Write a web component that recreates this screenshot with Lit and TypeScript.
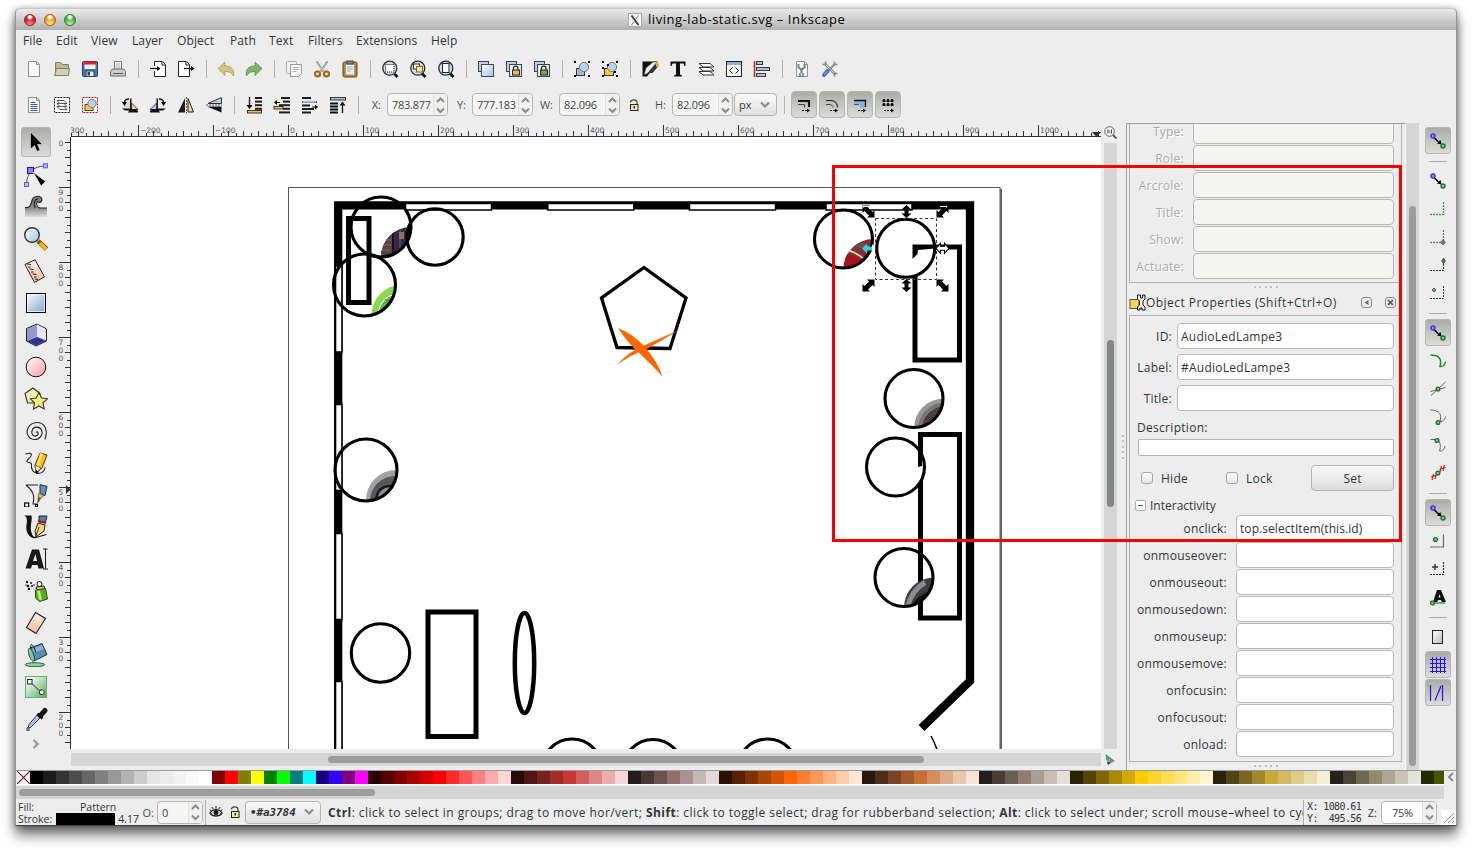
import { LitElement, html, svg, css } from "lit";
import { customElement } from "lit/decorators.js";

const FILE_MENU: [string, number][] = [
  ["File", 33], ["Edit", 35], ["View", 41], ["Layer", 45], ["Object", 53],
  ["Path", 39], ["Text", 39], ["Filters", 48], ["Extensions", 75], ["Help", 40],
];

const PALETTE = (
  "000000 1a1a1a 333333 4d4d4d 666666 808080 999999 b3b3b3 cccccc e6e6e6 ececec f2f2f2 f9f9f9 ffffff " +
  "800000 ff0000 808000 ffff00 008000 00ff00 008080 00ffff 160080 3600ff 800080 ff00ff " +
  "2b0000 550000 800000 aa0000 d40000 ff0000 ff2a2a ff5555 ff8080 ffaaaa ffd5d5 " +
  "280b0b 501616 782121 a02c2c c83737 d35f5f de8787 e9afaf f4d7d7 " +
  "241c1c 483737 6c5353 916f6f ac9393 c8b7b7 e3dbdb " +
  "2b1100 552200 803300 aa4400 d45500 ff6600 ff7f2a ff9955 ffb380 ffccaa ffe6d5 " +
  "28170b 502d16 784421 a05a2c c87137 d38d5f deaa87 e9c6af f4e3d7 " +
  "241f1c 483e37 6c5d53 917c6f ac9d93 c8beb7 e3dedb " +
  "2b2200 554400 806600 aa8800 d4aa00 ffcc00 ffd42a ffdd55 ffe680 ffeeaa fff6d5 " +
  "28220b 504416 786721 a0892c c8ab37 d3bc5f decd87 e9ddaf f4eed7 " +
  "24221c 484537 6c6753 918a6f aca793 c8c4b7 e3e2db 222b00 445500"
).split(" ");

const page = svg`<path d="M3.5 1.5h8l3 3v12h-11z" fill="#fafafa" stroke="#8f918c"/><path d="M11.5 1.5v3h3" fill="none" stroke="#8f918c"/>`;
const lens = svg`<path d="M12.5 13l4 4" stroke="#111" stroke-width="2.6"/><circle cx="8.8" cy="8.2" r="7" fill="#cfe0f2" stroke="#23282d" stroke-width="1.3"/>`;
const padlock = (c: string) => svg`<path d="M8.5 10V8.3a2.2 2.2 0 0 1 4.4 0V10" fill="none" stroke="#222" stroke-width="1.2"/><rect x="7.5" y="10" width="7" height="5" fill="${c}" stroke="#222"/>`;
const clones = svg`<rect x="1.5" y="1.5" width="10" height="10" fill="#b9d0e6" stroke="#3b4650"/><rect x="4.5" y="4.5" width="12" height="12" fill="url(#blue)" stroke="#3b4650"/>`;
const groupShape = svg`<rect x="3.5" y="8.5" width="8" height="7" fill="#9fbad5" stroke="#333"/><circle cx="11" cy="7" r="4.6" fill="#bcd2e8" stroke="#777"/>`;
const bars = (w: number[]) => w.map((v, i) => svg`<rect x="${17 - v}" y="${1 + i * 3.6}" width="${v}" height="2" fill="#1b1e1f"/>`);

const ICONS: Record<string, unknown> = {
  new: page,
  open: svg`<path d="M2.500 14.500v-12h5l2 2h6v10z" fill="#b9bb97" stroke="#7e805f"/><path d="M1.500 15.500l2-7h13l-1 7z" fill="#cfd1b0" stroke="#7e805f"/>`,
  save: svg`<rect x="1.500" y="1.500" width="15" height="15" rx="1" fill="#4577b4" stroke="#26426b"/><rect x="3.500" y="2" width="11" height="7" fill="#f4f4f4"/><rect x="3" y="1.500" width="12" height="3" fill="#e02020"/><rect x="5" y="11" width="8" height="5.500" fill="#e8e8e8" stroke="#345"/><rect x="6.500" y="12" width="2.500" height="3.500" fill="#27466f"/>`,
  print: svg`<path d="M5.500 10v-8.500h7V10" fill="#fff" stroke="#777"/><path d="M6.500 4h5M6.500 6h5M6.500 8h5" stroke="#aaa"/><path d="M1.500 16v-4.500l2-2.500h11l2 2.500V16z" fill="#ccc" stroke="#666"/><path d="M4 13.500h10" stroke="#555"/>`,
  import: svg`<path d="M5.500 6V1.500h8l3 3v12h-11V11" fill="#fff" stroke="#222"/><path d="M13 1.500v3.500h3.500" fill="none" stroke="#222"/><path d="M1 8.500h7" stroke="#111" stroke-width="1.300"/><path d="M8 6l3.500 2.500L8 11z"/>`,
  export: svg`<path d="M1.500 1.500h8l3 3v12h-11z" fill="#fff" stroke="#222"/><path d="M9 1.500v3.500h3.500" fill="none" stroke="#222"/><path d="M7 8.500h8" stroke="#111" stroke-width="1.300"/><path d="M14 6l3.500 2.500L14 11z"/>`,
  undo: svg`<path d="M1 8.500l7-6.500v4c7 0 9.500 4 8.500 10-1.500-3-4-4.500-8.500-4.500v4z" fill="#cfc587" stroke="#a2974e" stroke-dasharray="1.500 .6"/>`,
  redo: svg`<path d="M17 8.500L10 2v4C3 6 .5 10 1.500 16c1.500-3 4-4.500 8.500-4.500v4z" fill="#7fb46b" stroke="#4f8a3a" stroke-dasharray="1.500 .6"/>`,
  copy: svg`<rect x="1.500" y="1.500" width="10" height="12" rx="1" fill="#f3f3f3" stroke="#a8a8a8"/><path d="M5.500 4.500h11v9l-3 3h-8z" fill="#f6f6f6" stroke="#999"/><path d="M7.500 7.500h7M7.500 9.500h7M7.500 11.500h4" stroke="#b5b5b5"/>`,
  cut: svg`<path d="M3.500 1.500l7 10M14.500 1.500l-7 10" stroke="#8b8d89" stroke-width="2"/><path d="M4 2.500l6.500 9M14 2.500l-6.500 9" stroke="#ddd" stroke-width=".7"/><circle cx="4.500" cy="14" r="2.500" fill="none" stroke="#a9640e" stroke-width="2.200"/><circle cx="13.500" cy="14" r="2.500" fill="none" stroke="#a9640e" stroke-width="2.200"/>`,
  paste: svg`<rect x="2" y="2" width="14" height="15" rx="1.500" fill="#c0821f" stroke="#6d4508"/><rect x="4.500" y="4" width="9" height="11" fill="#f0f0f0" stroke="#999"/><rect x="6" y="1" width="6" height="3" fill="#888" stroke="#444"/><path d="M6 7h6M6 9h6M6 11h4" stroke="#aaa"/>`,
  zoomsel: svg`${lens}<rect x="4.500" y="4.500" width="8.500" height="7.500" fill="#fff" stroke="#111" stroke-dasharray="1 1"/>`,
  zoomdraw: svg`${lens}<rect x="4.500" y="4" width="6" height="5" fill="#fff4cf" stroke="#333"/><rect x="7.500" y="6.500" width="6" height="5.500" fill="#ffe9a8" stroke="#8a6414"/>`,
  zoompage: svg`${lens}<rect x="5.500" y="3.500" width="6.500" height="9" fill="#fff" stroke="#222"/>`,
  dup: clones,
  clone: svg`${clones}<rect x="5.500" y="5.500" width="10" height="10" fill="#fff" opacity=".6"/>${padlock("#f5b93a")}`,
  unclone: svg`${clones}<rect x="5.500" y="5.500" width="10" height="10" fill="#fff" opacity=".6"/>${padlock("#6db04c")}`,
  group: svg`${groupShape}<path d="M1 1h2v2H1zM15 1h2v2h-2zM1 15h2v2H1zM15 15h2v2h-2z"/>`,
  ungroup: svg`<rect x="3.500" y="8.500" width="9" height="7" fill="#ffc93c" stroke="#333"/><circle cx="11" cy="7" r="4.600" fill="#bcd2e8" stroke="#777"/><path d="M1 1h2v2H1zM15 1h2v2h-2zM1 15h2v2H1zM15 15h2v2h-2zM1 7h2v2H1zM13 11h2v2h-2zM6 4h2v2H6z"/>`,
  fill: svg`<path d="M1.500 1.500h15v2L6 16.500H1.500z" fill="#111"/><path d="M3 15L5 8l7-6h4l-9 11z" fill="#f1f1f1" stroke="#444" stroke-width=".6"/><path d="M7 13l9-10 1.500 3-6 7z" fill="#333"/><path d="M14 3l2-2 2 4-2 3z" fill="#f5a81c"/>`,
  text: svg`<path d="M1.500 1.500h15v4.500h-1l-1-2.500h-3.500v11l2 1v1H5v-1l2-1v-11H3.500L2.500 6h-1z" fill="#111"/>`,
  layers: svg`<g fill="#fff" stroke="#333"><path d="M2 11.500h11l4 3.500H6z"/><path d="M2 7.500h11l4 3.500H6z"/><path d="M2 3.500h11l4 3.500H6z"/></g>`,
  xml: svg`<rect x="1.500" y="1.500" width="15" height="15" fill="#fff" stroke="#222"/><path d="M2 3.500h14" stroke="#8fb3da" stroke-width="3"/><path d="M7.500 7.500l-3 3 3 3M10.500 7.500l3 3-3 3" fill="none" stroke="#111"/>`,
  align: svg`<path d="M1.500 1v16" stroke="#d11" stroke-width="1.400"/><g fill="#a9c1da" stroke="#333b44"><rect x="3.500" y="1.500" width="6" height="3"/><rect x="3.500" y="7.500" width="13" height="3"/><rect x="3.500" y="13.500" width="9" height="3"/></g>`,
  docprops: svg`${page}<path d="M5.500 4v3.500l3 2 3-2V4" fill="none" stroke="#777" stroke-width="1.800"/><path d="M8.500 9v4" stroke="#777" stroke-width="2"/><path d="M7 13v4M10 13v4" stroke="#3a6fb0" stroke-width="1.400"/>`,
  prefs: svg`<path d="M3.500 3.500l11 11" stroke="#8a8c88" stroke-width="2.600"/><path d="M4 4l10.500 10.500" stroke="#e4e4e4"/><path d="M14.500 3.500L6 12" stroke="#8a8c88" stroke-width="2.200"/><path d="M6.500 11l-3.500 4" stroke="#3c70b8" stroke-width="4" stroke-linecap="round"/><path d="M6 11.500l-2.500 3" stroke="#a9c8ee" stroke-linecap="round"/><path d="M1.500 4.500h3v-3M16.500 13.500h-3v3M16.500 4.500h-3v-3" fill="none" stroke="#8a8c88" stroke-width="1.600"/>`,
  selall: svg`${page}<path d="M5.500 6.500h5M5.500 8.500h7M5.500 10.500h7M5.500 12.500h7M5.500 14.500h7" stroke="#2b5b9c"/>`,
  sellayers: svg`<rect x="1.500" y="1.500" width="15" height="15" fill="#fff" stroke="#111" stroke-dasharray="2 1"/><g fill="#fff" stroke="#555"><path d="M4 10.500h7l3 3H7z"/><path d="M4 7.500h7l3 3H7z"/><path d="M4 4.500h7l3 3H7z"/></g>`,
  desel: svg`<rect x="1.500" y="1.500" width="15" height="15" fill="#fff" stroke="#c11" stroke-dasharray="2 1"/><rect x="4" y="8.500" width="8" height="6" fill="#ffc93c" stroke="#444"/><circle cx="11" cy="7.500" r="4.200" fill="#bcd2e8" stroke="#777"/>`,
  rotccw: svg`<path d="M10 2.500l1 9.500H1.500z" fill="#999" opacity=".25"/><path d="M10.500 7v6.500H17z" fill="#f4d58a" stroke="#222" stroke-width=".8"/><path d="M1 12.500h10v2H4zM9 13h6l2 2v1.500H7z" fill="#111"/><path d="M9 2.500h1.500V13H9z" fill="#222"/><path d="M3.500 7C3.500 4 5.500 3 8 3" fill="none" stroke="#111" stroke-width="1.300"/><path d="M1 6h5l-2.500 4z"/>`,
  rotcw: svg`<path d="M7.500 7v6.500H1z" fill="#b5cde4" stroke="#222" stroke-width=".8"/><path d="M17 12.500H7v2h7zM9 13H3l-2 2v1.500h10z" fill="#111"/><path d="M7.500 2.500H9V13H7.500z" fill="#222"/><path d="M14.500 7c0-3-2-4-4.500-4" fill="none" stroke="#111" stroke-width="1.300"/><path d="M12 6h5l-2.500 4z"/>`,
  fliph: svg`<path d="M8 2v14.500H1z" fill="#1c1c1c"/><path d="M11 2.500V16h5.500z" fill="#f4d58a" stroke="#222"/><path d="M9.500 1v16.500" stroke="#555" stroke-dasharray="2 1"/>`,
  flipv: svg`<path d="M16.500 10.500v6L2 10.500z" fill="#111"/><path d="M16.500 7.500v-6L3 7.500z" fill="#bad0e5" stroke="#333"/><path d="M1 9h16" stroke="#555" stroke-dasharray="2 1"/>`,
  tobottom: svg`${bars([7, 7, 7, 7])}<rect x="2.500" y="14.500" width="14" height="2.500" fill="#f2c451" stroke="#111" stroke-width=".8"/><path d="M4.500 1v9" stroke="#111" stroke-width="1.300"/><path d="M1.500 9h6l-3 4z"/>`,
  lower: svg`${bars([9, 7, 11, 7, 11])}<rect x="1" y="10.500" width="9" height="2.500" fill="#f2c451" stroke="#111" stroke-width=".8"/><path d="M2 6.500h5" stroke="#111"/><path d="M4 4l-3 2.500L4 9z"/>`,
  raise: svg`<path d="M1 2h9M1 6h15M1 9.500h8M1 13h12M1 16.500h9" stroke="#1b1e1f" stroke-width="2"/><rect x="1.500" y="4.800" width="14" height="2" fill="#a9c1da"/><path d="M11 11h4" stroke="#111"/><path d="M14 8.500l3 2.500-3 2.500z"/>`,
  totop: svg`<rect x="1.500" y="1.500" width="15" height="2.500" fill="#a9c1da" stroke="#111" stroke-width=".8"/><path d="M1 7.500h8M1 10.500h8M1 13.500h8M1 16.500h8" stroke="#111" stroke-width="2"/><path d="M13.500 8v9" stroke="#111" stroke-width="1.300"/><path d="M10.500 9.500h6l-3-4z"/>`,
  lock: svg`<path d="M5.500 6.500C5.500 3 11.500 3 12 6v2" fill="none" stroke="#444" stroke-width="1.200"/><rect x="5.500" y="8.500" width="7.500" height="6" fill="#f3e9a8" stroke="#222"/><path d="M9.200 10v2.500" stroke="#111" stroke-width="1.300"/>`,
  t1: svg`<path d="M3 5h11v6" fill="none" stroke="#111" stroke-width="2.200"/><path d="M3 8.500h6.500v3" fill="none" stroke="#444"/><path d="M7 14.500h5" stroke="#111" stroke-dasharray="2 1"/><path d="M12 12.500l3 2-3 2z"/>`,
  t2: svg`<path d="M3 4.500h5c4 0 6.500 3 6.500 7" fill="none" stroke="#222" stroke-width="1.100"/><path d="M3 8.500h3c3 0 4 1.500 4 3" fill="none" stroke="#444"/><path d="M7 14.500h5" stroke="#111" stroke-dasharray="2 1"/><path d="M12 12.500l3 2-3 2z"/>`,
  t3: svg`<path d="M3 4.500h11.500v7H9V8H3z" fill="#8fb2d6"/><path d="M3 4.500h11.500v6.500" fill="none" stroke="#111" stroke-width="1.300"/><path d="M3 8.500h5" stroke="#456"/><path d="M7 14.500h5" stroke="#111" stroke-dasharray="2 1"/><path d="M12 12.500l3 2-3 2z"/>`,
  t4: svg`<path d="M3 5h12M3 9h12" stroke="#111" stroke-width="1.200"/><path d="M5 3v8M9 3v8M13 3v8" stroke="#111" stroke-width="2" stroke-dasharray="3 1"/><path d="M5 14.500h7" stroke="#111" stroke-dasharray="2 1"/><path d="M12 12.500l3 2-3 2z"/>`,
  eye: svg`<path d="M3 10c3-4.500 9-4.500 12 0-3 4-9 4-12 0z" fill="#eee" stroke="#222" stroke-width="1.300"/><circle cx="9" cy="9.500" r="2.500" fill="#111"/><path d="M9 3v3M5 4l1.200 2.500M13 4l-1.200 2.500M2.500 6.500l2 1.500M15.500 6.500l-2 1.500" stroke="#222"/>`,
};

const TOOLS: unknown[] = [
  svg`<path d="M6.500 2v17l4-3.500 2.500 6 3-1.500-2.500-5.500h5z" fill="#000" stroke="#fff" stroke-width=".5"/>`,
  svg`<path d="M2.500 21C3 10 9 3 21 3" fill="none" stroke="#555"/><g fill="#b9b9f6" stroke="#5b5bec"><rect x=".5" y="19.500" width="4" height="4"/><rect x="19.500" y=".8" width="4" height="4"/></g><rect x="3.500" y="4.500" width="6" height="6" fill="#8484e6" stroke="#2010d0"/><path d="M9 9l12.500 9.500-4.500 4.500z" fill="#000" stroke="#fff" stroke-width=".6"/>`,
  svg`<path d="M1 12.500c5 1 6-3 7-7C9.500 0 17 0 18 4.500c0 2.500-3 4-4 2-3-.5-3 5 1 6.500h8v9H1z" fill="url(#grey)"/><path d="M1 12.500c5 1 6-3 7-7C9.500 0 17 0 18 4.500c0 2.500-3 4-4 2M11 13c-1.500-4-1-9 3-9M23 13h-7c-4-.5-4-6-2-6.500" fill="none" stroke="#222" stroke-width="1.100"/>`,
  svg`<path d="M14 14l8.500 8" stroke="#8a5a0a" stroke-width="5"/><path d="M16 16l6 6" stroke="#f7b21e" stroke-width="3.500"/><circle cx="8" cy="8" r="7.300" fill="url(#blue)" stroke="#333" stroke-width="1.400"/>`,
  svg`<path d="M1 5.500L11 .8l9.500 17L10.500 23.500z" fill="url(#peach)" stroke="#222"/><path d="M3 5l4 .5M4 8h2.500M5.500 10l4 .5M7 13h2.500M8.500 15l4 .5M10 18h2.500M11 20l3 .5" stroke="#222"/>`,
  svg`<rect x="2.500" y="2.500" width="19" height="19" fill="url(#steel)" stroke="#000"/><rect x="3.500" y="3.500" width="17" height="17" fill="none" stroke="#fff" opacity=".7"/>`,
  svg`<path d="M2.500 5.500L13 1l9.500 5v12L12 23l-9.500-5z" fill="#b7b7e4" stroke="#222"/><path d="M13 1.500l9 4.700v10.800L13 14z" fill="#e7e7ff"/><path d="M13 14l9 3.800L12 22.500 3 18z" fill="#33338c"/><path d="M3 6l10-4.500V14L3 17.500z" fill="#9797cf"/>`,
  svg`<circle cx="12" cy="12" r="9.800" fill="url(#pink)" stroke="#111"/>`,
  svg`<path d="M1 6.500L9 1l7 5.500-3 9.500H3.500z" fill="#f6efb3" stroke="#333" stroke-width="1.100"/><path d="M15 5.500l2.500 5.500 6 .8-4.500 4 1.200 6.200-5.200-3-5.500 3 1-6.200-4-4 5.700-.8z" fill="#fdf07e" stroke="#333" stroke-width="1.100"/>`,
  svg`<path d="M12 12.500c1.500-2 3 1 1.500 2.500-3 2.500-6.500 0-5.500-4C9 6 15.500 6 17.500 10c2 5-2 9.500-6.500 9.500-6 0-9-5.500-7.500-10C5.500 2 16 0 20.500 6c2.500 4 2 9 .5 13.500" fill="none" stroke="#222" stroke-width="1.100" transform="translate(0 1)"/>`,
  svg`<path d="M1.500 3c6-2 8 0 3 5-5 4 3 3 3 5-1 5 2 10 7 9.500 4-.5 6-3 6.500-6" fill="none" stroke="#222" stroke-width="1.100"/><path d="M11 14L16 2l7 2-5 13-6 5z" fill="#f8bd25" stroke="#513a07"/><path d="M11 14l6 3-5 5z" fill="#f6e6bd" stroke="#333" stroke-width=".6"/><path d="M12 19v4l3-2z"/><path d="M16 2l3 1-4 12-2-1z" fill="#ffe65c"/>`,
  svg`<path d="M2 2h12M2 2c7 6 9 10 7 19h4" fill="none" stroke="#222" stroke-width="1.100"/><path d="M16 1.500l7 2-2 9-5-2z" fill="#5f93bd" stroke="#234"/><path d="M15 10l5 2.500-3 3-3-1.500z" fill="#f0bb3a" stroke="#444" stroke-width=".7"/><path d="M14 14l3 1.500-4 6z" fill="#555"/><rect x=".7" y="20" width="4" height="4" fill="#fff" stroke="#000" stroke-width="1.200"/><rect x="11.500" y="21.500" width="2" height="2" fill="#fff" stroke="#000"/>`,
  svg`<path d="M.5.500h7c1 5-2 12 0 17 1 4 3 4.500 5 4.500l6-2 4-1v1l-7 2C8 26 1 19 2.500 10 3.500 5 3 2 .5.500z" fill="#111"/><path d="M15 1h8l-1.500 6H15z" fill="#4d80b5" stroke="#223"/><path d="M14 6l8 2" stroke="#b11" stroke-width="2"/><path d="M14 8l7 2-1 6-8 6-1-6z" fill="#fbd477" stroke="#222"/><path d="M12 21l3-9" stroke="#333"/>`,
  svg`<path d="M1.500 21.500L8 2.500h7l5 19h-5.500L13.500 18H8l-1 3.500zM9 14h4l-1.500-7z" fill="#181818"/><path d="M19 2h2.500M23.500 2h-2M21.500 2v19.500M19 22h5" stroke="#111" fill="none"/>`,
  svg`<g fill="#111"><circle cx="3" cy="3" r="1.200"/><circle cx="7" cy="4" r="1"/><circle cx="4" cy="7" r="1.300"/><circle cx="8" cy="7" r="1"/><circle cx="5" cy="10" r="1.300"/><circle cx="10" cy="6" r=".8"/><circle cx="2" cy="6" r=".7"/></g><circle cx="15.500" cy="5" r="2.500" fill="#fff" stroke="#222"/><path d="M12 8l8-1 1 3-8 1z" fill="#e9c45b" stroke="#222"/><path d="M11.500 11l10-1.500 2 10.500-8 2.500-4-3.500z" fill="#5cab1e" stroke="#2c520f"/><path d="M13 12l3-.5 2 10-3-1z" fill="#b8ec84"/>`,
  svg`<path d="M11.500 1.500l10 6L12 22.500l-9.500-6z" fill="url(#peach)" stroke="#222" stroke-width="1.100"/>`,
  svg`<path d="M6 5l12-4.500 5 11L10 18z" fill="#588dae" stroke="#1d3442"/><path d="M8 6l10-4 2 4L10 10z" fill="#a9cfe2" opacity=".6"/><path d="M6 5c-2 0-2 4-1 7s3 7 5 6-2-12-4-13z" fill="#7fca90" stroke="#245"/><path d="M7 6c-1-7 2-6 5 4" fill="none" stroke="#222"/><path d="M9 18v4" stroke="#7aa" stroke-width="2"/><ellipse cx="11" cy="21.700" rx="9.800" ry="2" fill="#8fd29c" stroke="#264"/>`,
  svg`<rect x="1.500" y="1.500" width="21" height="21" fill="url(#greenfade)" stroke="#62b066"/><path d="M6 7l12 11" stroke="#333"/><rect x="3.500" y="4.500" width="4.500" height="4.500" fill="#fff" stroke="#222"/><rect x="15.500" y="15" width="4.500" height="4.500" rx="1.500" fill="#fff" stroke="#222"/>`,
  svg`<path d="M13 8l3 3L7.500 19.500 4 21.500l1-4z" fill="#a9c3ee" stroke="#223" stroke-width=".9"/><path d="M13.500 6.500l5 5" stroke="#111" stroke-width="2.600"/><path d="M16.500 8.500l4.500-5" stroke="#111" stroke-width="5" stroke-linecap="round"/><path d="M4 20c-2 2-1.500 4 0 4s2-2 0-4z" fill="#6f93c9" stroke="#334" stroke-width=".8"/>`,
];

const nodePair = svg`<path d="M5 5.500l6 6" stroke="#000" stroke-width="1.500"/><path d="M12.500 12.500l-4.500-1 3.500-3.500z"/><circle cx="4" cy="4" r="2" fill="#9a9af2" stroke="#3a2df0" stroke-width="1.400"/><circle cx="14" cy="14" r="2" fill="#8dc08d" stroke="#187a20" stroke-width="1.400"/>`;
const gdot = (x: number, y: number) => svg`<circle cx="${x}" cy="${y}" r="1.900" fill="#9ab0a4" stroke="#167a1c" stroke-width="1.300"/>`;

interface Snap { icon?: unknown; on?: boolean; sep?: boolean }
const SNAPS: Snap[] = [
  { icon: nodePair, on: true }, { sep: true }, { icon: nodePair },
  { icon: svg`<path d="M14.500 2v12.500H1" fill="none" stroke="#57905c" stroke-width="1.300" stroke-dasharray="2 1"/>` },
  { icon: svg`<path d="M14.500 2v12.500H1" fill="none" stroke="#777" stroke-width="1.300" stroke-dasharray="2 1"/><path d="M14 11.500l2.500 3-2.500 2.500-2.500-2.500z" fill="#5d8a63" stroke="#3c5a40" stroke-width=".6"/>` },
  { icon: svg`<path d="M14.500 2v12.500H1" fill="none" stroke="#333" stroke-dasharray="2 1"/><path d="M14.500 2l2 3-2 3-2-3z" fill="#4c7a53" stroke="#2b4b30" stroke-width=".6"/>` },
  { icon: svg`<path d="M14.500 2v12.500H1" fill="none" stroke="#333" stroke-dasharray="2 1"/><circle cx="5" cy="6" r="1.500" fill="#8fb093" stroke="#246b2c"/>` },
  { sep: true }, { icon: nodePair, on: true },
  { icon: svg`<path d="M1.500 3c9 0 11.500 4 9.500 11.500 3 .5 5-2 5.500-5" fill="none" stroke="#189022" stroke-width="1.500"/>` },
  { icon: svg`<path d="M2 15.500L16.500 2M1.500 11.500l15-4" stroke="#666"/>${gdot(9, 9)}` },
  { icon: svg`<path d="M1.500 2c9 0 11.500 4 9.500 11.500 3 .5 5-2 5.500-5" fill="none" stroke="#666"/>${gdot(9, 14.5)}` },
  { icon: svg`<path d="M1.500 3.500h7c3 3 3.500 7 2 11.500 3 .5 5-2 5.500-5" fill="none" stroke="#666"/>${gdot(8, 4.5)}` },
  { icon: svg`<path d="M3 16l1.500-6M6 15l1.500-6M2 13l6-2M11 8l1.500-6M14 7l1.500-6M10.500 5.500l6-2" stroke="#c22" stroke-width="1.200"/>${gdot(9, 9)}` },
  { sep: true }, { icon: nodePair, on: true },
  { icon: svg`<path d="M14.500 2.500v12.500H1" fill="none" stroke="#666" stroke-width="1.200"/>${gdot(6.5, 7.5)}` },
  { icon: svg`<path d="M14.500 2v12.500H1" fill="none" stroke="#222" stroke-dasharray="2 1"/><path d="M3 7h6M6 4v6" stroke="#333" stroke-width="1.400"/>` },
  { icon: svg`<path d="M4 14L8 2h4l5 12h-4l-1-2H9l-1 2zM9.500 9.500h2L10.500 6z" fill="#111"/><path d="M2 15h14" stroke="#3b9c43" stroke-width="1.500"/>${gdot(3.5, 15)}` },
  { sep: true },
  { icon: svg`<rect x="3.500" y="2.500" width="10" height="13" fill="url(#sheet)" stroke="#222"/>` },
  { icon: svg`<path d="M1 3.500h16M1 7.500h16M1 11.500h16M1 15.500h16M3.500 1v16M7.500 1v16M11.500 1v16M15.500 1v16" stroke="#2b10ee"/>`, on: true },
  { icon: svg`<path d="M1.500 1v16M13.500 1v16M6 16.500L12 2" stroke="#2b10ee" stroke-width="1.200"/>`, on: true },
];

interface Lamp { x: number; y: number; r: number; art?: string; dx?: number }
/** Lamp and speaker markers placed on the drawing canvas. */
const LAMPS: Lamp[] = [
  { x: 381, y: 227, r: 30, art: "purple" },
  { x: 435, y: 237, r: 28.2 },
  { x: 364.5, y: 285, r: 31, art: "lime", dx: 7 },
  { x: 366, y: 470, r: 31, art: "dark" },
  { x: 380.5, y: 653, r: 29.2 },
  { x: 572, y: 769, r: 30 }, { x: 653, y: 769.5, r: 30 }, { x: 767.5, y: 769, r: 30 },
  { x: 843.5, y: 239, r: 29, art: "red" },
  { x: 914, y: 398.5, r: 29, art: "mesh" },
  { x: 904, y: 577.5, r: 29, art: "black" },
];

const ART: Record<string, unknown> = {
  purple: svg`<rect width="34" height="34" fill="#3a2745"/><path d="M0 8h12v26H0z" fill="#5b4140"/><path d="M3 14h9M2 19h9M0 24h10M3 9h8" stroke="#836a62"/><path d="M20 0v34" stroke="#467a44"/><path d="M19 6h5v7h-5z" fill="#8a7466"/><path d="M13 0v30" stroke="#181028" stroke-width="2"/>`,
  lime: svg`<rect width="34" height="34" fill="#8ad850"/><circle cx="28" cy="30" r="21" fill="#52bb45"/><circle cx="28" cy="30" r="20" fill="none" stroke="#e7f7df" stroke-width="1.300"/><circle cx="28" cy="30" r="15" fill="#2d9e49" stroke="#d6f1ce"/><path d="M13 15l9 1-2 2z" fill="#e44"/>`,
  dark: svg`<rect width="34" height="34" fill="#a2a2a2"/><circle cx="30" cy="32" r="25" fill="#55575a"/><path d="M11 34c0-10 4-17 15-17h8v17z" fill="#8c8e90" stroke="#1a1a1a" stroke-width="2.500"/><path d="M18 34c0-6 3-9 9-10v10z" fill="#2a2b2d"/>`,
  red: svg`<rect width="34" height="34" fill="#83303a"/><path d="M0 14l34 12v10H0z" fill="#a3131d"/><path d="M8 5l22 5" stroke="#66504a" stroke-width="5"/><path d="M4 12q9 2 16 8" fill="none" stroke="#f1e3c2" stroke-width="1.600"/>`,
  mesh: svg`<rect width="34" height="34" fill="#989896"/><circle cx="32" cy="32" r="27" fill="#777674"/><circle cx="32" cy="32" r="23" fill="#37302f"/><circle cx="32" cy="32" r="19" fill="none" stroke="#5b5452" stroke-width="7" stroke-dasharray="1 1"/>`,
  black: svg`<rect width="34" height="34" fill="#3c3e40"/><path d="M4 34c2-14 8-22 18-28" stroke="#8a8d90" stroke-width="5" fill="none"/><path d="M9 34c0-10 7-17 25-22v22z" fill="#151515"/>`,
};

const lamp = (l: Lamp, i: number) => svg`
  ${l.art ? svg`<clipPath id="lamp${i}"><circle cx="${l.x}" cy="${l.y}" r="${l.r}"/></clipPath>
    <g clip-path="url(#lamp${i})"><svg x="${l.x - 1 + (l.dx ?? 0)}" y="${l.y - 1}" width="34" height="34" viewBox="0 0 34 34"><g clip-path="url(#quarter)">${ART[l.art]}</g></svg></g>` : ""}
  <circle cx="${l.x}" cy="${l.y}" r="${l.r}" fill="none" stroke="#000" stroke-width="3.100"/>`;

const ARROW = "M-6-6H1.500L-.5-4 4 .5 6-1.500V6H-1.500L.5 4-4-.5-6 1.500z";
const VARROW = "M0-6.500L5-2H2v4h3L0 6.500-5 2h3v-4h-3z";

const canvasArt = svg`
  <path d="M1000.500 187.500H288.500V760M1000 187.500V760" fill="none" stroke="#555"/>
  <path d="M1001 189V760" stroke="#666" stroke-width="2"/>
  <path d="M338.200 760V205.300H970V681L921.500 728" fill="none" stroke="#000" stroke-width="8.300"/>
  ${[405.5, 547.8, 689.5, 826].map((x) => svg`<rect x="${x}" y="203.500" width="86" height="6.500" fill="#fff" stroke="#000" stroke-width="1.500"/>`)}
  ${[266, 404.5, 533.5, 681.5].map((y) => svg`<rect x="335.500" y="${y}" width="6.500" height="86" fill="#fff" stroke="#000" stroke-width="1.600"/>`)}
  <path d="M931 736Q935 743 937.500 751" fill="none" stroke="#000" stroke-width="1.500"/>
  <g fill="none" stroke="#000" stroke-width="5">
    <rect x="348.500" y="218.500" width="20.500" height="84"/>
    <rect x="915" y="247" width="44.500" height="113"/>
    <rect x="920.500" y="434.500" width="39" height="183.500"/>
    <rect x="428" y="612" width="48" height="124.500"/>
    <ellipse cx="524.500" cy="663" rx="9.700" ry="50" stroke-width="4.500"/>
  </g>
  <path d="M644 267.500L686 298 670 348.500 617 347.500 601.500 298z" fill="none" stroke="#000" stroke-width="3.300"/>
  <path d="M618 328Q632 333 645 347 657 361 663 377 652 365 637 351 628 343 618 328zM617 365Q628 352 645 345L679 330Q661 341 645 350 630 355 617 365z" fill="#ff6600"/>
  <circle cx="895.500" cy="467" r="29" fill="#fff" stroke="#000" stroke-width="3.100"/>
  <path d="M918 449v18l4-1V446z"/>
  ${LAMPS.map(lamp)}
  <circle cx="905.700" cy="248.300" r="29" fill="#fff" stroke="#000" stroke-width="3.100"/>
  <path d="M912.500 244.500H936l-1 4-17 1.500-.5 4-5 5z"/>
  <rect x="875.500" y="218.500" width="61" height="61" fill="none" stroke="#333" stroke-dasharray="3 2.500"/>
  <path d="${ARROW}" transform="translate(868.500 211.500)"/>
  <path d="${VARROW}" transform="translate(906.500 211.500)"/>
  <path d="${ARROW}" transform="translate(942.500 211.500) scale(-1 1)"/>
  <path d="${ARROW}" transform="translate(868.500 285.500) scale(-1 1)"/>
  <path d="${VARROW}" transform="translate(906.500 285.500)"/>
  <path d="${ARROW}" transform="translate(942.500 285.500)"/>
  <path d="M863.500 207.500v-1h6M940 206.500h6.500v1" fill="none" stroke="#fff" stroke-width="1.200"/>
  <path d="M862 248.500l5-5v3h5v-2l3 4-3 4v-2h-5v3z" fill="#2fd0d6"/>
  <path d="M872 246v-2l3 4.500-3 4v-2z" fill="#fff"/>
  <path d="${VARROW}" transform="translate(942.500 248.300) rotate(90)" fill="#fff" stroke="#000" stroke-width="1.100"/>`;

const hRuler = () => {
  const marks: unknown[] = [];
  for (let i = -29; i <= 108; i++) {
    const x = Math.round(288.2 + i * 7.5) + 0.5;
    const h = i % 10 === 0 ? 11 : i % 2 === 0 ? 5 : 3;
    marks.push(svg`<path d="M${x} ${136 - h}V136" stroke="#2c3236"/>`);
    if (i % 10 === 0) marks.push(svg`<text x="${x + 1.5}" y="133">${i < 0 ? "−" : ""}${Math.abs(i * 10)}</text>`);
  }
  return marks;
};
const vRuler = () => {
  const marks: unknown[] = [];
  for (let i = -6; i <= 74; i++) {
    const y = Math.round(187 + i * 7.5) + 0.5;
    const w = i % 10 === 0 ? 11 : i % 2 === 0 ? 5 : 3;
    marks.push(svg`<path d="M${70 - w} ${y}H70" stroke="#2c3236"/>`);
    if (i % 10 === 0) {
      String(900 - i * 10).split("").forEach((d, k) =>
        marks.push(svg`<text x="58.500" y="${y + 7.5 + k * 8}">${d}</text>`));
    }
  }
  return marks;
};

const TB1 = ["new", "open", "save", "print", "|", "import", "export", "|", "undo", "redo", "|", "copy", "cut", "paste", "|", "zoomsel", "zoomdraw", "zoompage", "|", "dup", "clone", "unclone", "|", "group", "ungroup", "|", "fill", "text", "layers", "xml", "align", "|", "docprops", "prefs"];
const TB2 = ["selall", "sellayers", "desel", "|", "rotccw", "rotcw", "fliph", "flipv", "|", "tobottom", "lower", "raise", "totop", "|"];

const icon = (g: unknown, size = 18) => html`<svg width=${size} height=${size} viewBox="0 0 ${size} ${size}">${g}</svg>`;
const tool = (n: string) => n === "|" ? html`<i class="sep"></i>` : html`<span class="cell">${icon(ICONS[n])}</span>`;
const chevrons = html`<span class="steps"><svg width="13" height="22" viewBox="0 0 13 22" fill="none" stroke="#8b8d89" stroke-width="2"><path d="M3 8l3.500-3.500L10 8M3 14.500L6.500 18l3.500-3.500"/></svg></span>`;
const spin = (v: string, cls = "") => html`<span class="spin ${cls}"><b>${v}</b>${chevrons}</span>`;
const dropMark = html`<svg width="10" height="8" viewBox="0 0 10 8" fill="none" stroke="#8b8d89" stroke-width="2.200"><path d="M1 1.500l4 4 4-4"/></svg>`;

@customElement("app-root")
export class AppRoot extends LitElement {
  static styles = css`
    :host { display: block; width: 1472px; height: 849px; overflow: hidden; background: #fff; position: relative; font: 12px "Open Sans", "Noto Sans", sans-serif; color: #2f3638; }
    * { box-sizing: border-box; }
    svg { display: block; flex: none; }
    .defs { position: absolute; width: 0; height: 0; }
    .desktop { padding: 8px 0 0 15px; }
    .window { width: 1442px; height: 818px; background: #ededed; border-left: 1px solid #969696; border-right: 1px solid #969696; border-bottom: 1px solid #3c4242; border-radius: 5px 5px 0 0; box-shadow: 0 9px 13px rgba(0,0,0,.55), 0 1px 7px rgba(0,0,0,.35); display: flex; flex-direction: column; }
    .title { height: 22px; border-radius: 5px 5px 0 0; background: linear-gradient(#e9e9e9, #cfcfcf 50%, #b0b0b0); border-top: 1px solid #c9c9c9; display: flex; align-items: center; flex: none; }
    .lights { display: flex; gap: 8px; padding-left: 8px; width: 612px; }
    .light { width: 12px; height: 12px; border-radius: 50%; border: 1px solid #802020; background: radial-gradient(circle at 50% 20%, #fff 0 12%, transparent 35%), radial-gradient(circle at 50% 100%, #ff9b9b, #dd1f2e 55%); }
    .light.y { border-color: #91601b; background: radial-gradient(circle at 50% 20%, #fff 0 12%, transparent 35%), radial-gradient(circle at 50% 100%, #ffee8e, #ec9c25 60%); }
    .light.g { border-color: #35702f; background: radial-gradient(circle at 50% 20%, #fff 0 12%, transparent 35%), radial-gradient(circle at 50% 100%, #c9f7a9, #4fb04c 60%); }
    .xlogo { width: 14px; height: 14px; border: 1px solid #aaa; background: #f3f3f3; display: flex; }
    .titletext { padding-left: 6px; color: #000; font: 13px/18px "Open Sans", sans-serif; padding-bottom: 1px; letter-spacing: .54px; white-space: nowrap; }
    .menu { height: 22px; display: flex; align-items: center; padding: 0 0 1px 7px; flex: none; letter-spacing: .1px; }
    .menu span { white-space: nowrap; }
    .tb { display: flex; align-items: center; padding-left: 4px; flex: none; }
    .tb.one { height: 34px; }
    .tb.two { height: 37px; }
    .cell { width: 28px; height: 28px; display: flex; align-items: center; justify-content: center; flex: none; }
    .sep { width: 12px; height: 18px; flex: none; display: flex; justify-content: center; }
    .sep::after { content: ""; width: 1px; background: #b3b5b2; height: 100%; }
    .sep.late { width: 14px; }
    .lab { text-align: right; padding-right: 6px; font-size: 11px; flex: none; color: #4a5052; }
    .spin { width: 60.5px; height: 23px; border: 1.5px solid #b4b6b3; border-radius: 4px; background: #f5f5f3; display: flex; align-items: center; flex: none; font-size: 11px; overflow: hidden; color: #3f4547; }
    .spin b { font-weight: 400; flex: 1; padding-left: 4px; letter-spacing: -.25px; white-space: nowrap; }
    .steps { width: 14px; height: 100%; background: #f0f0ef; border-left: 1px solid #e2e2e0; display: flex; align-items: center; }
    .combo { height: 23px; border: 1px solid #b2b4b1; border-radius: 4px; background: linear-gradient(#fafafa, #e0e0e0); display: flex; align-items: center; justify-content: space-between; padding: 0 6px 0 5px; flex: none; }
    .combo.unit { width: 43px; margin-left: 1.5px; font-size: 11px; padding-left: 4px; }
    .tog { width: 26px; height: 27px; margin-right: 2px; border: 1px solid #b3b6b1; border-radius: 4px; background: linear-gradient(#a9aca7, #dcdddb); display: flex; align-items: center; justify-content: center; flex: none; }
    .main { height: 647px; display: flex; flex: none; }
    .tools { width: 41px; padding: 4px 0 0 5px; display: flex; flex-direction: column; }
    .toolcell { width: 30px; height: 32px; display: flex; align-items: center; justify-content: center; flex: none; }
    .toolcell.on { height: 30px; margin-bottom: 2px; border: 1px solid #b3b6b1; border-radius: 3px; background: linear-gradient(#a9aca7, #dcdddb); }
    .more { display: flex; justify-content: center; width: 30px; padding-top: 4px; }
    .view { width: 1060px; display: grid; grid-template-columns: 14px 1030px 3px 13px; grid-template-rows: 14px 612px 4px 13px 4px; flex: none; }
    .ruler { overflow: hidden; font: 7.5px "DejaVu Sans", sans-serif; fill: #50585c; }
    .board { background: #fff; }
    .vbar { grid-column: 4; grid-row: 2; background: #d5d5d5; margin-top: 6px; padding: 197px 3px 0; }
    .vbar::after { content: ""; display: block; height: 167px; border-radius: 4px; background: #838686; }
    .hbar { grid-column: 2; grid-row: 4; background: #d5d5d5; padding: 3px 0 0 257px; }
    .hbar::after { content: ""; display: block; width: 596px; height: 7px; border-radius: 4px; background: #9c9d9e; }
    .corner { grid-column: 4; grid-row: 1; padding-top: 3px; }
    .cms { grid-column: 4; grid-row: 4; }
    .grip { width: 9px; display: flex; flex-direction: column; justify-content: center; align-items: center; gap: 3.5px; flex: none; padding-left: 2px; }
    .grip i, .hgrip i { width: 2px; height: 2px; background: #bfc0bf; }
    .hgrip { display: flex; gap: 3.5px; justify-content: center; align-items: center; height: 8px; flex: none; }
    .dock { width: 280px; border-left: 1px solid #9fa1a0; border-top: 1px solid #9fa1a0; border-right: 1px solid #fff; padding-left: 2px; padding-right: 3px; display: flex; flex-direction: column; overflow: hidden; flex: none; }
    .frame { border: 1px solid #aeb2b0; }
    .frame.link { height: 159px; border-top: 0; overflow: hidden; display: flex; flex-direction: column; justify-content: flex-end; padding-bottom: 3px; flex: none; }
    .frame.props { height: 447px; padding-top: 7px; flex: none; }
    .row { display: flex; align-items: center; height: 26px; margin-bottom: 1px; padding-right: 7px; flex: none; }
    .row label { text-align: right; padding-right: 9px; letter-spacing: .25px; white-space: nowrap; }
    .link label { width: 63px; color: #a7abac; text-shadow: 1px 1px 0 #fff; }
    .link .row:last-child { margin-bottom: 0; }
    .field { flex: 1; height: 26px; border: 1.5px solid #b6bab7; border-radius: 4px; background: #fff; display: flex; align-items: center; padding-left: 3px; letter-spacing: .25px; white-space: nowrap; }
    .events .field { letter-spacing: .07px; }
    .link .field { background: #f4f4f2; }
    .head { height: 22px; margin-bottom: 2px; display: flex; align-items: center; flex: none; font-size: 12px; letter-spacing: .46px; }
    .head span { width: 215px; white-space: nowrap; }
    .hbtn { width: 11px; height: 11px; border: 1px solid #888b89; border-radius: 3px; margin-right: 13px; display: flex; align-items: center; justify-content: center; flex: none; }
    .hbtn:last-child { margin-right: 0; }
    .three .row { margin-bottom: 5px; }
    .three label { width: 47px; padding-right: 5px; }
    .desc { height: 23px; padding: 3px 0 0 7px; letter-spacing: .3px; }
    .area { height: 17px; margin: 0 7px 0 8px; background: #fff; border: 1px solid #b0b3b1; border-radius: 2px; }
    .checks { height: 26px; margin-top: 9px; display: flex; align-items: center; padding: 0 7px 0 11px; letter-spacing: .25px; }
    .box { width: 12px; height: 12px; border: 1px solid #a3a6a4; border-radius: 3px; background: linear-gradient(#fff, #e4e4e4); margin-right: 8px; flex: none; }
    .checks span { width: 66px; }
    .btn { margin-left: auto; width: 84px; height: 26px; border: 1px solid #b2b4b1; border-radius: 4px; background: linear-gradient(#fafafa, #dcdcdc); display: flex; align-items: center; justify-content: center; font-weight: 400; }
    .expand { height: 24px; display: flex; align-items: center; padding: 5px 0 0 5px; }
    .minus { width: 11px; height: 11px; border: 1px solid #a9acaa; border-radius: 2px; background: #fff; display: flex; align-items: center; justify-content: center; margin-right: 4px; }
    .minus::after { content: ""; width: 5px; height: 1px; background: #555; }
    .events label { width: 106px; }
    .events .row:last-child { margin-bottom: 0; }
    .dbar { width: 13px; background: #d5d5d5; padding: 83px 3px 0; flex: none; }
    .dbar::after { content: ""; display: block; height: 560px; border-radius: 4px; background: #9b9c9d; }
    .snaps { width: 37px; padding: 4px 0 0 6px; display: flex; flex-direction: column; }
    .snap { width: 26px; height: 28px; display: flex; align-items: center; justify-content: center; flex: none; }
    .snap.on { height: 27px; margin-bottom: 1px; border: 1px solid #b3b6b1; border-radius: 3px; background: linear-gradient(#a9aca7, #dcdddb); }
    .hsep { height: 12px; display: flex; align-items: center; justify-content: center; flex: none; width: 26px; }
    .hsep::after { content: ""; width: 18px; height: 1px; background: #a9abaa; }
    .palette { height: 16px; border-top: 1px solid #9a9c9b; display: flex; flex: none; padding-left: 1px; }
    .swatches { width: 1427px; height: 14px; border-bottom: 1px solid #fff; display: flex; overflow: hidden; flex: none; }
    .sw { width: 13px; height: 13px; flex: none; }
    .pchev { padding: 1px 0 0 3px; }
    .pbar { height: 13px; width: 1428px; background: #d5d5d5; padding: 3px 0 0 3px; flex: none; }
    .pbar::after { content: ""; display: block; width: 356px; height: 7px; border-radius: 4px; background: #9c9d9e; }
    .status { height: 26px; display: flex; align-items: center; flex: none; }
    .style { width: 125px; display: grid; grid-template-columns: 38px 59px 28px; font-size: 10.5px; line-height: 12px; padding-left: 2px; height: 26px; padding-top: 2px; flex: none; white-space: nowrap; }
    .style .pat { text-align: center; padding-left: 24px; }
    .style .ink { background: #000; height: 12px; }
    .style .w { padding-left: 3px; font-size: 11px; letter-spacing: -.2px; }
    .spin.small { width: 46px; }
    .vline { width: 1px; height: 25px; background: #aeb0af; flex: none; }
    .vline.first { margin-left: 2px; }
    .lab.opacity { width: 16px; padding-right: 3px; }
    .scell { width: 19px; display: flex; justify-content: center; flex: none; }
    .combo.layer { width: 76px; margin-left: 1px; font: italic bold 11px "DejaVu Sans Mono", monospace; letter-spacing: -.1px; padding-left: 4px; }
    .hint { width: 982px; padding-left: 7px; overflow: hidden; white-space: nowrap; letter-spacing: .437px; flex: none; }
    .coords { width: 59px; padding: 1px 0 0 3px; font: 10px/12px "DejaVu Sans Mono", monospace; letter-spacing: -.6px; white-space: pre; flex: none; }
    .zl { width: 18px; text-align: right; padding-right: 4px; flex: none; font-size: 11px; }
    .spin.zoom { width: 56px; background: #fff; }
    .spin.zoom b { padding-left: 10px; }
    .resize { margin: 11px 0 0 4px; background: #fff; }
    .callout { position: absolute; left: 832px; top: 165px; width: 570px; height: 377px; border: 3px solid #f80000; }
  `;

  render() {
    return html`
      <svg class="defs"><defs>
        <linearGradient id="blue" x2="1" y2="1"><stop stop-color="#fff"/><stop offset="1" stop-color="#9fc0e2"/></linearGradient>
        <linearGradient id="steel" x2="1" y2="1"><stop stop-color="#fff"/><stop offset="1" stop-color="#7ba3c9"/></linearGradient>
        <linearGradient id="grey" x2="0" y2="1"><stop stop-color="#777"/><stop offset=".55" stop-color="#888"/><stop offset="1" stop-color="#ddd"/></linearGradient>
        <linearGradient id="peach" x2="0" y2="1"><stop stop-color="#fff4ee"/><stop offset="1" stop-color="#f6b594"/></linearGradient>
        <linearGradient id="pink" x2="1" y2="1"><stop stop-color="#fff"/><stop offset="1" stop-color="#ff9aa4"/></linearGradient>
        <linearGradient id="greenfade" x2="1" y2="1"><stop offset=".1" stop-color="#fff"/><stop offset="1" stop-color="#4cb257"/></linearGradient>
        <linearGradient id="sheet" x2="1" y2="1"><stop stop-color="#fff"/><stop offset="1" stop-color="#bbb"/></linearGradient>
        <clipPath id="quarter"><circle cx="31" cy="31" r="30"/></clipPath>
      </defs></svg>
      <div class="desktop"><div class="window">
        <div class="title">
          <div class="lights"><i class="light"></i><i class="light y"></i><i class="light g"></i></div>
          <span class="xlogo"><svg width="12" height="12" viewBox="0 0 12 12"><path d="M2.500 1.500l7 9.500" stroke="#444" stroke-width="2"/><path d="M9.500 1.500l-7 9.500" stroke="#777"/></svg></span>
          <span class="titletext">living-lab-static.svg – Inkscape</span>
        </div>
        <div class="menu">${FILE_MENU.map(([n, w]) => html`<span style="width:${w}px">${n}</span>`)}</div>
        <div class="tb one">${TB1.map(tool)}</div>
        <div class="tb two">
          ${TB2.map(tool)}
          <span class="lab" style="width:23px">X:</span>${spin("783.877")}
          <span class="lab" style="width:24.5px">Y:</span>${spin("777.183")}
          <span class="lab" style="width:26.5px">W:</span>${spin("82.096")}
          <span class="cell">${icon(ICONS.lock)}</span>
          <span class="lab" style="width:24.5px">H:</span>${spin("82.096")}
          <span class="combo unit">px${dropMark}</span>
          <i class="sep late"></i>
          ${["t1", "t2", "t3", "t4"].map((n) => html`<span class="tog">${icon(ICONS[n])}</span>`)}
        </div>
        <div class="main">
          <div class="tools">
            ${TOOLS.map((t, i) => html`<span class="toolcell ${i === 0 ? "on" : ""}">${icon(t, 24)}</span>`)}
            <span class="more"><svg width="8" height="10" viewBox="0 0 8 10"><path d="M1.500 1l4 4-4 4" fill="none" stroke="#8b8d89" stroke-width="2"/></svg></span>
          </div>
          <div class="view">
            <span></span>
            <svg class="ruler" width="1030" height="14" viewBox="71 123 1030 14">
              ${hRuler()}<text x="70" y="133">300</text>
              <path d="M71 136.500H1101" stroke="#2c3236"/><path d="M1092 132h9l-4.500 5z" fill="#2c3236"/></svg>
            <span></span>
            <span class="corner"><svg width="13" height="13" viewBox="0 0 13 13"><circle cx="5.500" cy="5.500" r="4.800" fill="#f5f5f5" stroke="#666"/><path d="M9 9l3.500 3.500" stroke="#555" stroke-width="1.800"/><path d="M4 3.500v4M7.500 3.500v4M5.700 4.500v.8M5.700 6.200v.8" stroke="#444"/></svg></span>
            <svg class="ruler" width="14" height="612" viewBox="57 137 14 612">
              ${vRuler()}<text x="58.500" y="145.500">0</text>
              <path d="M70.500 137V749" stroke="#2c3236"/><path d="M66 485l4.500 4.500L66 494z" fill="#2c3236"/></svg>
            <svg class="board" width="1030" height="612" viewBox="71 137 1030 612">${canvasArt}</svg>
            <span class="vbar"></span>
            <span class="hbar"></span>
            <span class="cms"><svg width="13" height="13" viewBox="0 0 13 13"><path d="M1.500 1L11 8 4 12z" fill="#9a9"/><path d="M1.500 1l5 4-4 3z" fill="#2fb052"/><path d="M6 5l5 3-5 1z" fill="#b66"/><path d="M3 8.500l4 1-3 2.500z" fill="#33b"/></svg></span>
          </div>
          <div class="grip"><i></i><i></i><i></i><i></i><i></i></div>
          <div class="dock">
            <div class="frame link">
              ${["Type:", "Role:", "Arcrole:", "Title:", "Show:", "Actuate:"].map((n) => html`<div class="row"><label>${n}</label><span class="field"></span></div>`)}
            </div>
            <div class="hgrip"><i></i><i></i><i></i><i></i><i></i></div>
            <div class="head">
              <svg width="17" height="17" viewBox="0 0 17 17"><rect x="1" y="5.500" width="9" height="9" fill="#f9d34f" stroke="#555"/><path d="M8.500 1v4l2 2v4l-2 2v3h2.500v-2h2v2h3v-3l-2-2V7l2-2V1h-2.500v3h-2V1z" fill="#eee" stroke="#111"/></svg>
              <span>Object Properties (Shift+Ctrl+O)</span>
              <i class="hbtn"><svg width="5" height="5" viewBox="0 0 5 5"><path d="M4.500 0v5L.5 2.500z" fill="#666"/></svg></i>
              <i class="hbtn"><svg width="7" height="7" viewBox="0 0 7 7"><path d="M1 1l5 5M6 1L1 6" stroke="#666" stroke-width="1.800"/></svg></i>
            </div>
            <div class="frame props">
              <div class="three">
                <div class="row"><label>ID:</label><span class="field">AudioLedLampe3</span></div>
                <div class="row"><label>Label:</label><span class="field">#AudioLedLampe3</span></div>
                <div class="row"><label>Title:</label><span class="field"></span></div>
              </div>
              <div class="desc">Description:</div>
              <div class="area"></div>
              <div class="checks"><i class="box"></i><span>Hide</span><i class="box"></i><span>Lock</span><b class="btn">Set</b></div>
              <div class="expand"><i class="minus"></i>Interactivity</div>
              <div class="events">
                ${["onclick", "onmouseover", "onmouseout", "onmousedown", "onmouseup", "onmousemove", "onfocusin", "onfocusout", "onload"].map((n, i) => html`<div class="row"><label>${n}:</label><span class="field">${i === 0 ? "top.selectItem(this.id)" : ""}</span></div>`)}
              </div>
            </div>
            <div class="hgrip"><i></i><i></i><i></i><i></i><i></i></div>
          </div>
          <div class="dbar"></div>
          <div class="snaps">
            ${SNAPS.map((s) => s.sep ? html`<i class="hsep"></i>` : html`<span class="snap ${s.on ? "on" : ""}">${icon(s.icon)}</span>`)}
          </div>
        </div>
        <div class="palette">
          <div class="swatches">
            <svg width="13" height="13" viewBox="0 0 13 13"><rect width="13" height="13" fill="#fff"/><path d="M0 0l13 13M13 0L0 13" stroke="#7a1010" stroke-width="1.200"/></svg>
            ${PALETTE.map((c) => html`<i class="sw" style="background:#${c}"></i>`)}
          </div>
          <span class="pchev"><svg width="8" height="10" viewBox="0 0 8 10"><path d="M6 1L2 5l4 4" fill="none" stroke="#8b8d89" stroke-width="2"/></svg></span>
        </div>
        <div class="pbar"></div>
        <div class="status">
          <div class="style"><span>Fill:</span><span class="pat">Pattern</span><span></span><span>Stroke:</span><span class="ink"></span><span class="w">4.17</span></div>
          <span class="lab opacity">O:</span>${spin("0", "small")}
          <i class="vline first"></i>
          <span class="scell">${icon(ICONS.eye)}</span><span class="scell">${icon(ICONS.lock)}</span>
          <span class="combo layer">•#a3784${dropMark}</span>
          <span class="hint"><b>Ctrl</b>: click to select in groups; drag to move hor/vert; <b>Shift</b>: click to toggle select; drag for rubberband selection; <b>Alt</b>: click to select under; scroll mouse–wheel to cyc</span>
          <i class="vline"></i>
          <span class="coords">X: 1080.61
Y:  495.56</span>
          <span class="zl">Z:</span>${spin("75%", "zoom")}
          <svg class="resize" width="15" height="15" viewBox="0 0 15 15"><path d="M3 13L13 3M7 13l6-6M11 13l2-2" stroke="#999"/></svg>
        </div>
      </div></div>
      <div class="callout"></div>`;
  }
}
